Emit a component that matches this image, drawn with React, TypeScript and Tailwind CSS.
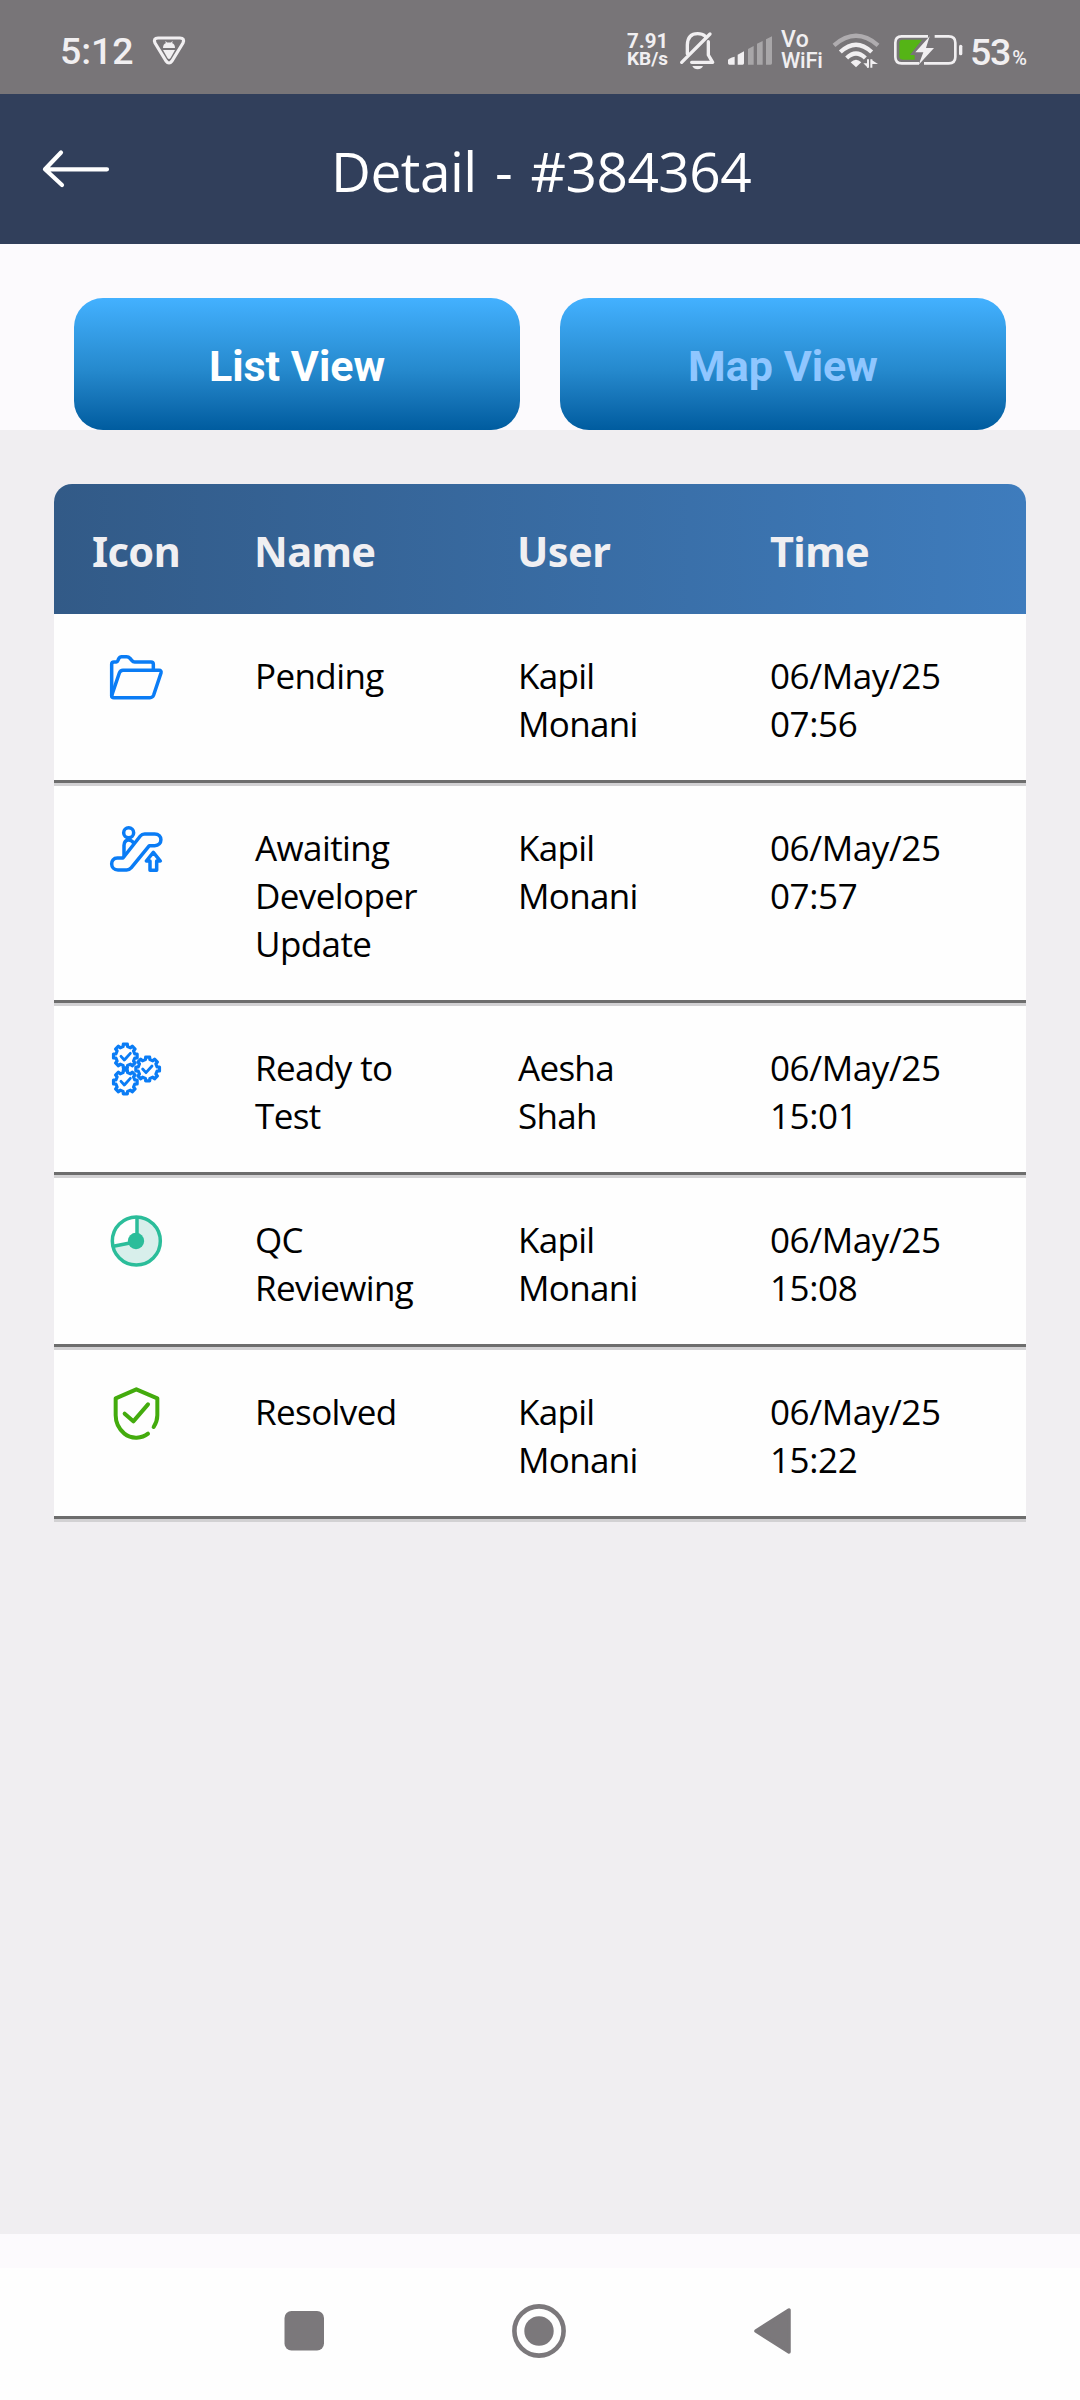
import type { ReactNode } from "react";

const BLUE = "#0a7cf5";
const LIGHT = "#f1eff1";

// Outline of an eight-toothed gear around (cx, cy)
function gearPath(cx: number, cy: number) {
  const pts: string[] = [];
  for (let i = 0; i < 8; i++) {
    const mid = (i * Math.PI) / 4 - Math.PI / 2;
    const corners = [
      [-0.23, 29],
      [-0.17, 36],
      [0.17, 36],
      [0.23, 29],
    ];
    for (const [da, r] of corners) {
      const x = cx + r * Math.cos(mid + da);
      const y = cy + r * Math.sin(mid + da);
      pts.push(`${x.toFixed(1)} ${y.toFixed(1)}`);
    }
  }
  return `M${pts.join("L")}Z`;
}

function RowIcon({ box, color, children }: { box: string; color: string; children: ReactNode }) {
  return (
    <svg
      viewBox={box}
      className="h-[60px] w-[60px]"
      fill="none"
      stroke={color}
      strokeWidth={10.5}
      strokeLinecap="round"
      strokeLinejoin="round"
    >
      {children}
    </svg>
  );
}

const FolderIcon = () => (
  <RowIcon box="48 51 180 180" color={BLUE}>
    <path d="M65 197V103Q65 96 72 96H79Q82 96 84 91L86 86Q89 80 95 80H110Q116 80 119 84L126 92Q129 96 134 96H183Q190 96 190 103V118" />
    <path d="M65 197L88 129Q91 121 99 121H207Q215 121 213 129L191 195Q188 203 180 203H72Q64 203 65 197Z" />
  </RowIcon>
);

const EscalatorIcon = () => (
  <RowIcon box="48 57 180 180" color={BLUE}>
    <circle cx="116" cy="98" r="15" />
    <path d="M82 174H99L151 108Q156 102 164 102H194C219 102 219 137 194 137H178L124 203Q118 210 110 210H84C59 210 59 174 82 174Z" />
    <path d="M102 168V136Q103 120 116 120Q124 120 131 129" />
    <path d="M190 157L211 183H200V211H180V183H169Z" />
  </RowIcon>
);

const GearsIcon = () => (
  <RowIcon box="48 57 180 180" color={BLUE}>
    <path d={gearPath(106, 108)} strokeWidth={9.5} />
    <path d={gearPath(106, 186)} strokeWidth={9.5} />
    <path d={gearPath(173, 147)} strokeWidth={9.5} />
    <path d="M93 109L103 120L121 100M93 184L103 195L121 175M158 147L168 158L186 138" strokeWidth={8.5} />
  </RowIcon>
);

const ReviewIcon = () => (
  <RowIcon box="48 63 180 180" color="#2bbd9a">
    <path d="M139 153V81A72 72 0 1 1 69 169Z" fill="#d8efeb" stroke="none" />
    <circle cx="139" cy="153" r="72" />
    <path d="M141 153V84M139 155L70 169" />
    <circle cx="138" cy="153" r="24.5" fill="#2bbd9a" stroke="none" />
  </RowIcon>
);

const ShieldIcon = () => (
  <RowIcon box="48 579 180 180" color="#43ab0d">
    <path d="M174 731C157 745 125 749 103 731Q77 709 77 676V625L139 598L202 625V676Q202 694 191 711" strokeWidth={12} />
    <path d="M104 671L130 694L174 643" strokeWidth={12} />
  </RowIcon>
);

const rows = [
  { Icon: FolderIcon, name: ["Pending"], user: ["Kapil", "Monani"], time: ["06/May/25", "07:56"] },
  { Icon: EscalatorIcon, name: ["Awaiting", "Developer", "Update"], user: ["Kapil", "Monani"], time: ["06/May/25", "07:57"] },
  { Icon: GearsIcon, name: ["Ready to", "Test"], user: ["Aesha", "Shah"], time: ["06/May/25", "15:01"] },
  { Icon: ReviewIcon, name: ["QC", "Reviewing"], user: ["Kapil", "Monani"], time: ["06/May/25", "15:08"] },
  { Icon: ShieldIcon, name: ["Resolved"], user: ["Kapil", "Monani"], time: ["06/May/25", "15:22"] },
];

function Lines({ items, className }: { items: string[]; className?: string }) {
  return (
    <div className={className}>
      {items.map((t) => (
        <div key={t} className="whitespace-nowrap">{t}</div>
      ))}
    </div>
  );
}

function StatusBar() {
  return (
    <div className="flex h-[94px] bg-[#787578] font-[Roboto] text-[#f1eff1]">
      <div className="ml-[60px] w-[91px] pt-[28px] text-[37.5px] leading-[46px] font-medium tracking-[-0.1px]">5:12</div>
      <svg viewBox="0 0 36 94" className="h-[94px] w-9" fill={LIGHT}>
        <path
          d="M7 38H29Q34 38 32 43L21 61Q18 65 15 61L4 43Q2 38 7 38Z"
          fill="none"
          stroke={LIGHT}
          strokeWidth="3.2"
          strokeLinejoin="round"
        />
        <path d="M12 48Q12 44 15 43L14 41.5H15L16 42.6H20L21 41.5H22L21 43Q24 44 24 48ZM12 50H24L19.5 58Q18 60 16.5 58Z" />
      </svg>
      <div className="ml-[440px] w-[51px] pt-[32px] text-[20.5px] leading-[18px] font-bold whitespace-nowrap">
        <div>7.91</div>
        <div className="text-[19px]">KB/s</div>
      </div>
      {/* muted bell */}
      <svg viewBox="234 0 120 282" className="h-[94px] w-10" fill="none" stroke={LIGHT} strokeWidth="10" strokeLinecap="round" strokeLinejoin="round">
        <path d="M262 161V135Q263 101 293 101Q307 101 315 108M325 125V165L338 187H275M330 102L245 187" />
        <path d="M277 198H309Q304 208 293 208Q282 208 277 198Z" fill={LIGHT} stroke="none" />
      </svg>
      {/* signal strength */}
      <svg viewBox="378 0 150 282" className="ml-2 h-[94px] w-[50px]" fill={LIGHT}>
        <path d="M384 180Q385 175 404 170V194H388Q384 194 384 190ZM413 164L432 154V190Q432 194 428 194H413Z" />
        <g opacity="0.4">
          <path d="M444 147L461 138V194H444ZM471 131L488 123V194H471ZM498 118L516 109V190Q516 194 512 194H498Z" />
        </g>
      </svg>
      <div className="ml-[5px] w-[49px] pt-[29px] text-[22px] leading-[21px] font-medium whitespace-nowrap">
        <div className="text-[23px] tracking-[0.5px]">Vo</div>
        <div className="tracking-[-0.3px]">WiFi</div>
      </div>
      <svg viewBox="690 0 156 282" className="h-[94px] w-[52px]" fill="none" stroke={LIGHT} strokeWidth="13">
        <path d="M702 136Q768 79 834 136" opacity="0.45" />
        <path d="M721 156Q768 112 815 156M740 174Q768 147 796 174" />
        <path d="M752 187Q768 172 784 187L768 202Z" fill={LIGHT} stroke="none" />
        <path d="M804 178V203M814 178V203" strokeWidth="6" />
        <path d="M790 190H804V204ZM814 179L834 192H814Z" fill={LIGHT} stroke="none" />
      </svg>
      {/* charging battery */}
      <svg viewBox="876 0 222 282" className="ml-[10px] h-[94px] w-[74px]" fill="none">
        <path d="M908 119H966L930 165H944V179H908Q898 179 898 169V129Q898 119 908 119Z" fill="#55b416" />
        <path d="M984 109H905Q886 109 886 128V171Q886 190 905 190H957M1004 109H1046Q1066 109 1066 128V171Q1066 190 1046 190H972" stroke={LIGHT} strokeWidth="8" />
        <path d="M989 109L946 157H970L956 194L1002 144H978Z" fill={LIGHT} />
        <path d="M1082 139V161" stroke={LIGHT} strokeWidth="10" strokeLinecap="round" />
      </svg>
      <div className="ml-[4px] pt-[29px] text-[37.5px] leading-[46px] font-medium whitespace-nowrap tracking-[-1.2px]">
        53<span className="ml-[2px] text-[20px] tracking-normal">%</span>
      </div>
    </div>
  );
}

function Header() {
  return (
    <div className="grid h-[150px] grid-cols-[331px_1fr] bg-[#313f5b] text-white">
      <svg viewBox="0 0 331 150" className="h-[150px] w-[331px]" fill="none" stroke="currentColor" strokeWidth="4.2" strokeLinecap="round">
        <path d="M107 75.3H45L61 58.5M45 75.3L62 91" strokeLinejoin="round" />
      </svg>
      <h1 className="pt-[39px] font-['Open_Sans'] text-[55px] leading-[76px] font-normal whitespace-nowrap tracking-[-0.5px] [word-spacing:4.5px]">
        Detail - #384364
      </h1>
    </div>
  );
}

function TabButton({ label, active }: { label: string; active?: boolean }) {
  return (
    <button
      className={`h-[132px] w-[446px] rounded-[29px] bg-linear-to-b from-[#43b1ff] via-[#2589cd] via-55% to-[#005c9f] pt-[5px] font-[Roboto] text-[43px] font-bold ${
        active ? "text-white" : "text-[#8fc6ff]"
      }`}
    >
      {label}
    </button>
  );
}

function HistoryTable() {
  return (
    <div className="mx-[54px] mt-[54px] w-[972px] overflow-hidden rounded-t-[18px] bg-[#fefefe]">
      <div className="grid h-[130px] grid-cols-[162px_263px_253px_1fr] bg-linear-to-r from-[#325a87] to-[#3e7cbd] pt-[39px] pl-[38px] font-['Noto_Sans'] text-[41.5px] leading-[57px] font-bold tracking-[-0.6px] text-[#f0eff2]">
        <div>Icon</div>
        <div>Name</div>
        <div>User</div>
        <div>Time</div>
      </div>
      {rows.map(({ Icon, name, user, time }) => (
        <div
          key={time[1]}
          className="grid grid-cols-[149px_263px_252px_1fr] border-b-[3px] border-[#d2d1d3] pl-[52px] font-['Open_Sans'] text-[35px] leading-[48px] tracking-[-0.6px] text-black"
        >
          <div className="col-span-4 -ml-[52px] grid grid-cols-subgrid border-b-[3px] border-[#6d6d6d] pt-[38px] pb-[32px] pl-[52px]">
            <div className="-mt-[5px] h-0">
              <Icon />
            </div>
            <Lines items={name} />
            <Lines items={user} className="tracking-[-0.7px]" />
            <Lines items={time} className="tracking-[-0.4px]" />
          </div>
        </div>
      ))}
    </div>
  );
}

function NavBar() {
  return (
    <div className="flex h-[132px] items-start bg-[#fefefe] pt-[34px] pl-[275px]">
      <svg viewBox="0 0 58 58" className="h-[58px] w-[58px]">
        <rect x="9.5" y="9" width="39.5" height="39.5" rx="7" fill="#7b787b" />
      </svg>
      <svg viewBox="0 0 58 58" className="mr-[186px] ml-[177px] h-[58px] w-[58px]">
        <circle cx="29" cy="29" r="24.6" fill="none" stroke="#7b787b" strokeWidth="4.6" />
        <circle cx="29" cy="29" r="14.7" fill="#7b787b" />
      </svg>
      <svg viewBox="0 0 58 58" className="h-[58px] w-[58px]">
        <path d="M2 29L35 8V50Z" fill="#7b787b" stroke="#7b787b" strokeWidth="3.5" strokeLinejoin="round" />
      </svg>
    </div>
  );
}

export default function App() {
  return (
    <div className="flex h-[2400px] w-[1080px] flex-col overflow-hidden bg-[#fcfafd]">
      <StatusBar />
      <Header />
      <div className="flex h-[186px] items-end gap-10 pl-[74px]">
        <TabButton label="List View" active />
        <TabButton label="Map View" />
      </div>
      <div className="flex h-[1804px] flex-col bg-[#f0eef1]">
        <HistoryTable />
      </div>
      <div className="h-[34px]" />
      <NavBar />
    </div>
  );
}
